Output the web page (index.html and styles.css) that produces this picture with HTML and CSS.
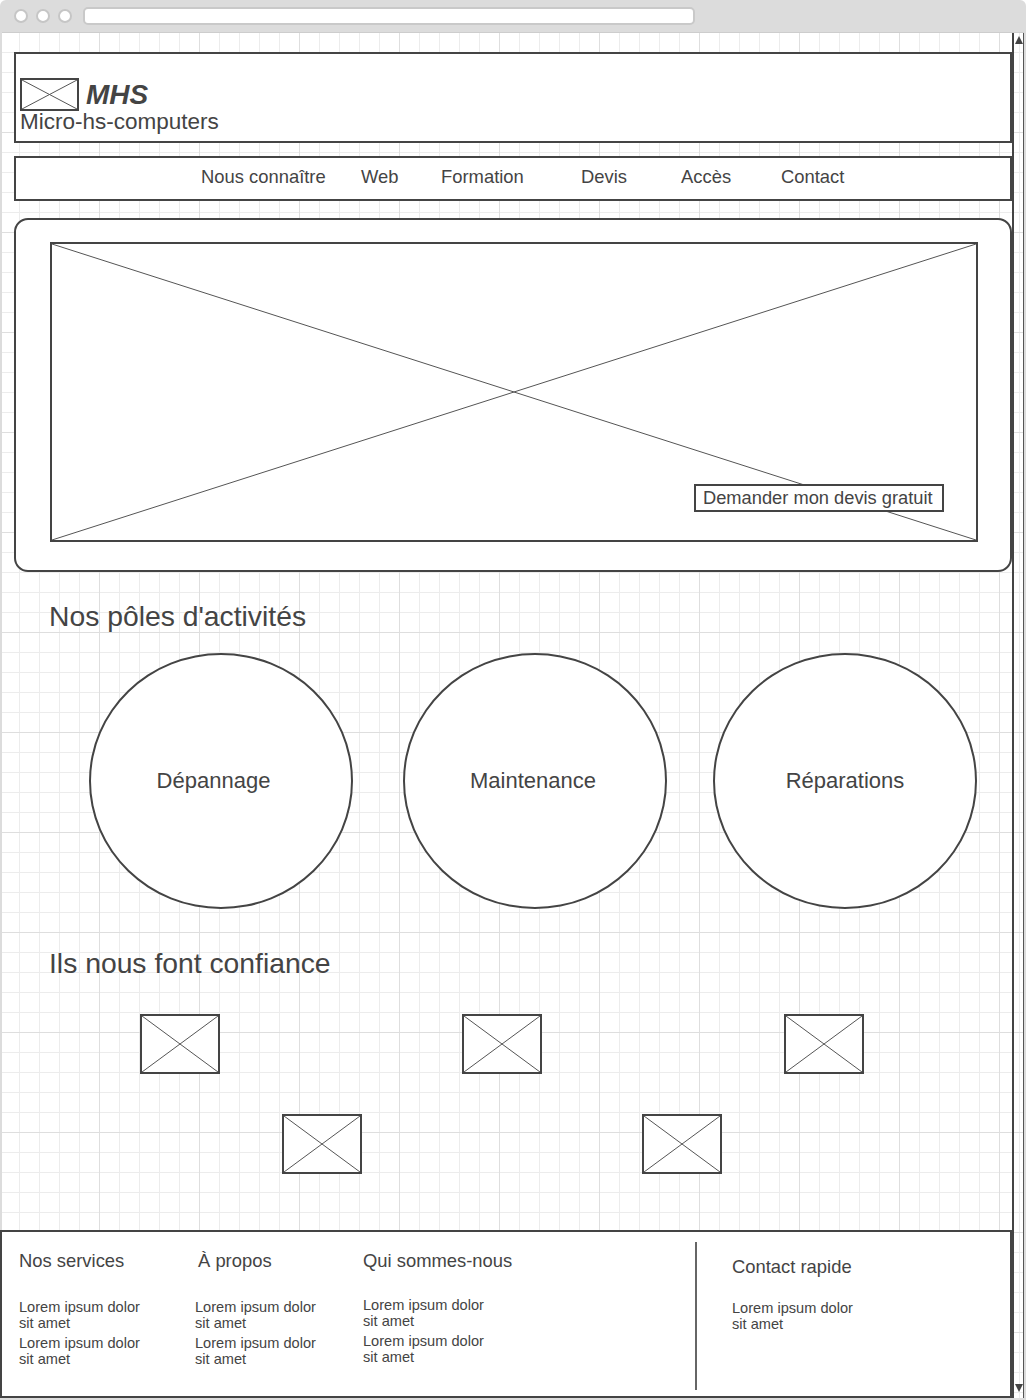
FILE: index.html
```html
<!DOCTYPE html>
<html lang="fr">
<head>
<meta charset="utf-8">
<title>MHS - Micro-hs-computers</title>
<link rel="stylesheet" href="styles.css">
</head>
<body>
<div class="window">
  <div class="chrome">
    <span class="dot"></span><span class="dot"></span><span class="dot"></span>
    <span class="address"></span>
  </div>
  <div class="viewport">
    <div class="page">
      <header class="header">
        <div class="brand">
          <div class="ph logo-ph">
            <svg class="xcross" viewBox="0 0 100 100" preserveAspectRatio="none"><line x1="0" y1="0" x2="100" y2="100"/><line x1="100" y1="0" x2="0" y2="100"/></svg>
          </div>
          <span class="mhs">MHS</span>
        </div>
        <div class="tagline">Micro-hs-computers</div>
      </header>

      <nav class="nav">
        <a class="nav-item n1" href="#">Nous connaître</a>
        <a class="nav-item n2" href="#">Web</a>
        <a class="nav-item n3" href="#">Formation</a>
        <a class="nav-item n4" href="#">Devis</a>
        <a class="nav-item n5" href="#">Accès</a>
        <a class="nav-item" href="#">Contact</a>
      </nav>

      <section class="hero">
        <div class="ph hero-img">
          <svg class="xcross" viewBox="0 0 100 100" preserveAspectRatio="none"><line x1="0" y1="0" x2="100" y2="100"/><line x1="100" y1="0" x2="0" y2="100"/></svg>
          <a class="hero-cta" href="#">Demander mon devis gratuit</a>
        </div>
      </section>

      <h2 class="section-title title-1">Nos pôles d'activités</h2>
      <div class="poles">
        <div class="pole pole-1">Dépannage</div>
        <div class="pole pole-2">Maintenance</div>
        <div class="pole pole-3">Réparations</div>
      </div>

      <h2 class="section-title title-2">Ils nous font confiance</h2>
      <div class="partners partners-1">
        <div class="ph partner"><svg class="xcross" viewBox="0 0 100 100" preserveAspectRatio="none"><line x1="0" y1="0" x2="100" y2="100"/><line x1="100" y1="0" x2="0" y2="100"/></svg></div>
        <div class="ph partner"><svg class="xcross" viewBox="0 0 100 100" preserveAspectRatio="none"><line x1="0" y1="0" x2="100" y2="100"/><line x1="100" y1="0" x2="0" y2="100"/></svg></div>
        <div class="ph partner"><svg class="xcross" viewBox="0 0 100 100" preserveAspectRatio="none"><line x1="0" y1="0" x2="100" y2="100"/><line x1="100" y1="0" x2="0" y2="100"/></svg></div>
      </div>
      <div class="partners partners-2">
        <div class="ph partner"><svg class="xcross" viewBox="0 0 100 100" preserveAspectRatio="none"><line x1="0" y1="0" x2="100" y2="100"/><line x1="100" y1="0" x2="0" y2="100"/></svg></div>
        <div class="ph partner"><svg class="xcross" viewBox="0 0 100 100" preserveAspectRatio="none"><line x1="0" y1="0" x2="100" y2="100"/><line x1="100" y1="0" x2="0" y2="100"/></svg></div>
      </div>

      <footer class="footer">
        <div class="fcol c1">
          <h3>Nos services</h3>
          <div class="flist">
            <p>Lorem ipsum dolor<br>sit amet</p>
            <p>Lorem ipsum dolor<br>sit amet</p>
          </div>
        </div>
        <div class="fcol c2">
          <h3>À propos</h3>
          <div class="flist">
            <p>Lorem ipsum dolor<br>sit amet</p>
            <p>Lorem ipsum dolor<br>sit amet</p>
          </div>
        </div>
        <div class="fcol c3">
          <h3>Qui sommes-nous</h3>
          <div class="flist">
            <p>Lorem ipsum dolor<br>sit amet</p>
            <p>Lorem ipsum dolor<br>sit amet</p>
          </div>
        </div>
        <div class="fdivider"></div>
        <div class="fcol c4">
          <h3>Contact rapide</h3>
          <div class="flist">
            <p>Lorem ipsum dolor<br>sit amet</p>
          </div>
        </div>
      </footer>
    </div>
    <div class="scrollbar">
      <span class="arrow-up"></span>
      <span class="arrow-down"></span>
    </div>
  </div>
</div>
</body>
</html>
```

FILE: styles.css
```css
* { box-sizing: border-box; }

html, body {
  margin: 0;
  padding: 0;
}

body {
  width: 1026px;
  height: 1400px;
  overflow: hidden;
  background: #fff;
  color: #444;
  font-family: "Liberation Sans", Arial, sans-serif;
}

.window {
  width: 1026px;
  height: 1400px;
  background: #dcdcdc;
  border-radius: 6px 6px 0 0;
  padding: 0 2px 2px 2px;
  display: flex;
  flex-direction: column;
}

/* browser chrome */
.chrome {
  flex: none;
  height: 33px;
  display: flex;
  align-items: center;
  gap: 8px;
  padding-left: 12px;
  border-bottom: 1px solid #cdcdcd;
}

.dot {
  width: 14px;
  height: 14px;
  border-radius: 50%;
  background: #fff;
  border: 2px solid #c6c6c6;
}

.address {
  margin-left: 3px;
  width: 612px;
  height: 18px;
  background: #fff;
  border: 2px solid #c9c9c9;
  border-radius: 5px;
}

/* viewport with grid */
.viewport {
  flex: 1;
  display: flex;
  background-color: #fff;
  background-image:
    linear-gradient(to right, #dedede 1px, transparent 1px),
    linear-gradient(to bottom, #dedede 1px, transparent 1px),
    linear-gradient(to right, #ececec 1px, transparent 1px),
    linear-gradient(to bottom, #ececec 1px, transparent 1px);
  background-size: 100px 100px, 100px 100px, 20px 20px, 20px 20px;
  background-position: 97px 0, 0 99px, 17px 0, 0 19px;
}

.page {
  width: 1010px;
  flex: none;
  padding-left: 12px;
  display: flex;
  flex-direction: column;
}

.scrollbar {
  width: 12px;
  flex: none;
  border-left: 2px solid #444;
  border-right: 1px solid #555;
  display: flex;
  flex-direction: column;
  justify-content: space-between;
  align-items: center;
  padding: 3px 0 6px;
}

.arrow-up {
  width: 0;
  height: 0;
  border-left: 4px solid transparent;
  border-right: 4px solid transparent;
  border-bottom: 8px solid #444;
}

.arrow-down {
  width: 0;
  height: 0;
  border-left: 4px solid transparent;
  border-right: 4px solid transparent;
  border-top: 8px solid #444;
}

/* placeholders */
.ph {
  border: 2px solid #444;
  background: #fff;
}

.xcross {
  display: block;
  width: 100%;
  height: 100%;
}

.xcross line {
  stroke: #555;
  stroke-width: 1;
  vector-effect: non-scaling-stroke;
}

/* header */
.header {
  margin-top: 19px;
  height: 91px;
  border: 2px solid #444;
  background: #fff;
  padding: 24px 0 0 4px;
}

.brand {
  display: flex;
  align-items: center;
  gap: 7px;
  height: 33px;
}

.logo-ph {
  width: 59px;
  height: 33px;
}

.mhs {
  font-size: 28px;
  line-height: 32px;
  font-weight: bold;
  font-style: italic;
}

.tagline {
  font-size: 22.5px;
  line-height: 22px;
}

/* nav */
.nav {
  margin-top: 13px;
  height: 45px;
  border: 2px solid #444;
  background: #fff;
  display: flex;
  padding: 8px 0 0 185px;
  font-size: 18.4px;
  line-height: 21px;
}

.nav-item {
  color: #444;
  text-decoration: none;
}

.n1 { width: 160px; }
.n2 { width: 80px; }
.n3 { width: 140px; }
.n4 { width: 100px; }
.n5 { width: 100px; }

/* hero */
.hero {
  margin-top: 17px;
  height: 354px;
  border: 2px solid #444;
  border-radius: 14px;
  background: #fff;
  padding: 22px 32px 28px 34px;
}

.hero-img {
  position: relative;
  height: 300px;
}

.hero-cta {
  position: absolute;
  right: 32px;
  bottom: 28px;
  width: 250px;
  height: 28px;
  border: 2px solid #444;
  background: #fff;
  color: #444;
  text-decoration: none;
  font-size: 18.3px;
  line-height: 24px;
  padding-left: 7px;
  white-space: nowrap;
}

/* sections */
.section-title {
  font-size: 28.3px;
  font-weight: normal;
  line-height: 32px;
  margin: 0 0 0 35px;
}

.title-1 { margin-top: 28px; }
.title-2 { margin-top: 38px; }

.poles {
  display: flex;
  padding-left: 75px;
  margin-top: 21px;
}

.pole {
  width: 264px;
  height: 256px;
  border: 2px solid #444;
  border-radius: 50%;
  background: #fff;
  display: flex;
  align-items: center;
  justify-content: center;
  font-size: 22px;
}

.pole-1 { padding-right: 15px; }
.pole-2 { margin-left: 50px; padding-right: 4px; }
.pole-3 { margin-left: 46px; }

.partners {
  display: flex;
}

.partners-1 {
  gap: 242px;
  padding-left: 126px;
  margin-top: 35px;
}

.partners-2 {
  gap: 280px;
  padding-left: 268px;
  margin-top: 40px;
}

.partner {
  width: 80px;
  height: 60px;
}

/* footer */
.footer {
  margin-top: 56px;
  margin-left: -14px;
  width: 1012px;
  height: 168px;
  border: 2px solid #444;
  background: #fff;
  display: flex;
  padding-left: 17px;
}

.fcol {
  padding-top: 18px;
}

.fcol h3 {
  margin: 0;
  font-size: 18.4px;
  font-weight: normal;
  line-height: 21px;
}

.flist {
  margin-top: 29px;
}

.flist p {
  margin: 0 0 5px;
  font-size: 14.6px;
  line-height: 15.5px;
}

.c1 { width: 176px; }

.c2 { width: 168px; }
.c2 h3 { padding-left: 3px; }

.c3 { width: 332px; }
.c3 .flist { margin-top: 27px; }

.fdivider {
  width: 2px;
  background: #666;
  margin: 10px 0 6px;
}

.c4 {
  margin-left: 35px;
  padding-top: 24px;
}

.c4 .flist { margin-top: 24px; }
```
